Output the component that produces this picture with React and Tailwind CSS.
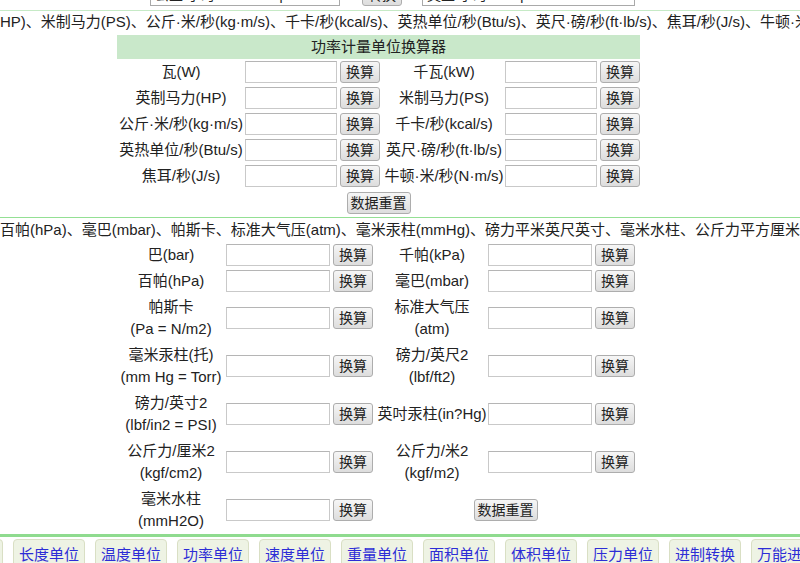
import React from "react";

const font = { fontFamily: '"Liberation Sans", "Noto Sans CJK SC", sans-serif' };

const powerRows = [
  ["瓦(W)", "千瓦(kW)"],
  ["英制马力(HP)", "米制马力(PS)"],
  ["公斤·米/秒(kg·m/s)", "千卡/秒(kcal/s)"],
  ["英热单位/秒(Btu/s)", "英尺·磅/秒(ft·lb/s)"],
  ["焦耳/秒(J/s)", "牛顿·米/秒(N·m/s)"],
];

const pressureRows = [
  [["巴(bar)"], ["千帕(kPa)"]],
  [["百帕(hPa)"], ["毫巴(mbar)"]],
  [["帕斯卡", "(Pa = N/m2)"], ["标准大气压", "(atm)"]],
  [["毫米汞柱(托)", "(mm Hg = Torr)"], ["磅力/英尺2", "(lbf/ft2)"]],
  [["磅力/英寸2", "(lbf/in2 = PSI)"], ["英吋汞柱(in?Hg)"]],
  [["公斤力/厘米2", "(kgf/cm2)"], ["公斤力/米2", "(kgf/m2)"]],
];

const tabs = ["首页", "长度单位", "温度单位", "功率单位", "速度单位", "重量单位", "面积单位", "体积单位", "压力单位", "进制转换", "万能进制"];

function Btn({ children, className = "" }) {
  return (
    <button className={`h-[22px] border border-[#adadad] rounded-[3px] bg-gradient-to-b from-[#f6f6f6] to-[#dddddd] text-[14px] leading-[20px] text-[#222] ${className}`}>
      {children}
    </button>
  );
}

function Field({ w }) {
  return <input type="text" className={`h-[22px] ${w} border border-[#c9c9c9] border-t-[#b5b5b5] bg-white outline-none`} />;
}

function Label({ lines }) {
  return (
    <div className="flex flex-col items-center justify-center text-center leading-[22px] whitespace-nowrap">
      {lines.map((l) => (
        <span key={l}>{l}</span>
      ))}
    </div>
  );
}

export default function App() {
  return (
    <div style={font} className="w-[800px] h-[563px] overflow-hidden bg-white text-[15px] text-[#222]">
      {/* tail of previous converter */}
      <div className="h-[11px] border-b border-[#c6eac6] overflow-hidden">
        <div className="flex items-center -mt-[16px] h-[22px]">
          <div className="ml-[150px] w-[190px] h-[22px] border border-[#a9a9a9] text-[14px] leading-[20px] px-[4px] whitespace-nowrap overflow-hidden">公里/小时 kilometre per hour</div>
          <Btn className="ml-[22px] w-[40px]">转换</Btn>
          <div className="ml-[20px] w-[213px] h-[22px] border border-[#a9a9a9] text-[14px] leading-[20px] px-[4px] whitespace-nowrap overflow-hidden">英里/小时 mile per hour</div>
        </div>
      </div>

      <div className="h-[24px] leading-[22px] whitespace-nowrap overflow-hidden">
        HP)、米制马力(PS)、公斤·米/秒(kg·m/s)、千卡/秒(kcal/s)、英热单位/秒(Btu/s)、英尺·磅/秒(ft·lb/s)、焦耳/秒(J/s)、牛顿·米/秒(N·m/s)
      </div>

      {/* power table */}
      <div className="ml-[117px] w-[523px] border-b border-transparent">
        <div className="h-[24px] bg-[#c9e8ca] text-center leading-[23px]">功率计量单位换算器</div>
        <div className="grid grid-cols-[128px_95px_43px_122px_95px_40px]">
          {powerRows.map(([a, b]) => (
            <React.Fragment key={a}>
              <div className="h-[26px] flex items-center justify-center whitespace-nowrap">{a}</div>
              <div className="h-[26px] flex items-center"><Field w="w-[92px]" /></div>
              <div className="h-[26px] flex items-center"><Btn className="w-[40px]">换算</Btn></div>
              <div className="h-[26px] flex items-center justify-center whitespace-nowrap">{b}</div>
              <div className="h-[26px] flex items-center"><Field w="w-[92px]" /></div>
              <div className="h-[26px] flex items-center"><Btn className="w-[40px]">换算</Btn></div>
            </React.Fragment>
          ))}
          <div className="col-span-6 h-[27px] flex items-center justify-center">
            <Btn className="w-[64px]">数据重置</Btn>
          </div>
        </div>
      </div>

      <div className="border-t border-[#94e094]" />
      <div className="h-[24px] leading-[24px] whitespace-nowrap overflow-hidden">
        百帕(hPa)、毫巴(mbar)、帕斯卡、标准大气压(atm)、毫米汞柱(mmHg)、磅力平米英尺英寸、毫米水柱、公斤力平方厘米等
      </div>

      {/* pressure table */}
      <div className="ml-[116px] w-[519px] grid grid-cols-[110px_107px_43px_112px_107px_40px] items-center">
        {pressureRows.map(([a, b], i) => {
          const h = i < 2 ? "h-[26px]" : "h-[48px]";
          return (
            <React.Fragment key={a[0]}>
              <div className={`${h} flex items-center justify-center`}><Label lines={a} /></div>
              <div className={`${h} flex items-center`}><Field w="w-[104px]" /></div>
              <div className={`${h} flex items-center`}><Btn className="w-[40px]">换算</Btn></div>
              <div className={`${h} flex items-center justify-center`}><Label lines={b} /></div>
              <div className={`${h} flex items-center`}><Field w="w-[104px]" /></div>
              <div className={`${h} flex items-center`}><Btn className="w-[40px]">换算</Btn></div>
            </React.Fragment>
          );
        })}
        <div className="h-[48px] flex items-center justify-center"><Label lines={["毫米水柱", "(mmH2O)"]} /></div>
        <div className="h-[48px] flex items-center"><Field w="w-[104px]" /></div>
        <div className="h-[48px] flex items-center"><Btn className="w-[40px]">换算</Btn></div>
        <div className="col-span-3 h-[48px] flex items-center justify-center">
          <Btn className="w-[64px]">数据重置</Btn>
        </div>
      </div>

      {/* nav tabs */}
      <div className="border-t-[3px] border-[#8fdb8f] pt-[2px]">
        <div className="flex gap-[10px] -ml-[69px]">
          {tabs.map((t) => (
            <div key={t} className="shrink-0 w-[72px] h-[30px] border border-[#d9dfc4] rounded-t-[4px] bg-[#eef3e4] text-[#2d2dd6] text-center leading-[30px] whitespace-nowrap overflow-hidden">
              {t}
            </div>
          ))}
        </div>
      </div>
    </div>
  );
}
